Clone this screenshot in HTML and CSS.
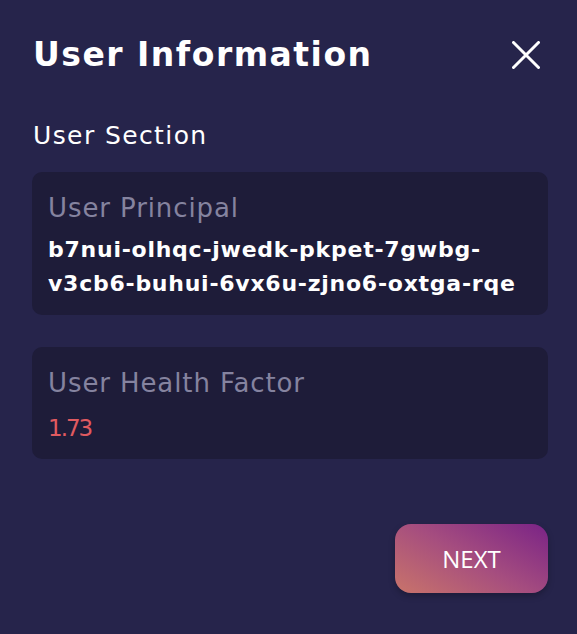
FILE: index.html
```html
<!DOCTYPE html>
<html>
<head>
<meta charset="utf-8">
<link rel="stylesheet" href="styles.css">
</head>
<body>
<div class="modal">
  <div class="header">
    <h1 class="title">User Information</h1>
    <button class="close" aria-label="Close">
      <svg width="28" height="28" viewBox="0 0 28 28"><path d="M1.5 1.5 L26.5 26.5 M26.5 1.5 L1.5 26.5" stroke="#fff" stroke-width="3" stroke-linecap="round"/></svg>
    </button>
  </div>
  <div class="section">User Section</div>
  <div class="card card-principal">
    <div class="label">User Principal</div>
    <div class="value principal">b7nui-olhqc-jwedk-pkpet-7gwbg-<br>v3cb6-buhui-6vx6u-zjno6-oxtga-rqe</div>
  </div>
  <div class="card card-health">
    <div class="label label-health">User Health Factor</div>
    <div class="value health">1.73</div>
  </div>
  <div class="footer">
    <button class="next">NEXT</button>
  </div>
</div>
</body>
</html>
```
FILE: styles.css
```css
html, body {
  margin: 0;
  padding: 0;
  background: #26244b;
}
body {
  font-family: "DejaVu Sans", Inter, sans-serif;
  color: #ffffff;
}
.modal {
  width: 577px;
  height: 634px;
  box-sizing: border-box;
  padding: 35px 29px 0 32px;
  display: flex;
  flex-direction: column;
}
.header {
  display: flex;
  justify-content: space-between;
  align-items: center;
  height: 40px;
}
.title {
  margin: 0;
  font-size: 33px;
  font-weight: 700;
  line-height: 40px;
  padding-left: 1px;
  letter-spacing: 1.5px;
}
.close {
  background: none;
  border: none;
  padding: 0;
  width: 28px;
  height: 28px;
  margin-right: 8px;
  display: flex;
  cursor: pointer;
}
.section {
  margin-top: 46px;
  font-size: 25px;
  line-height: 30px;
  padding-left: 1px;
  letter-spacing: 1.4px;
}
.card {
  background: #1e1c39;
  border-radius: 10px;
  padding: 19px 16px 0;
  box-sizing: border-box;
}
.card-principal {
  margin-top: 21px;
  height: 143px;
}
.card-health {
  margin-top: 32px;
  height: 112px;
}
.label {
  font-size: 26px;
  line-height: 34px;
  color: #85839f;
  letter-spacing: 0.9px;
}
.principal {
  margin-top: 8px;
  font-size: 22px;
  font-weight: 700;
  line-height: 34px;
  letter-spacing: 0.75px;
}
.health {
  margin-top: 13px;
  font-size: 23px;
  line-height: 30px;
  letter-spacing: -2px;
  color: #e05a60;
}
.footer {
  display: flex;
  justify-content: flex-end;
  margin-top: 65px;
}
.next {
  width: 153px;
  height: 69px;
  border: none;
  border-radius: 16px;
  background: linear-gradient(30deg, #c9746a 0%, #a54d7f 50%, #7a2386 100%);
  color: #fff;
  font-family: "Open Sans", sans-serif;
  font-size: 24px;
  padding: 0;
  box-shadow: 0 3px 6px rgba(0, 0, 0, 0.25);
  cursor: pointer;
}
```
